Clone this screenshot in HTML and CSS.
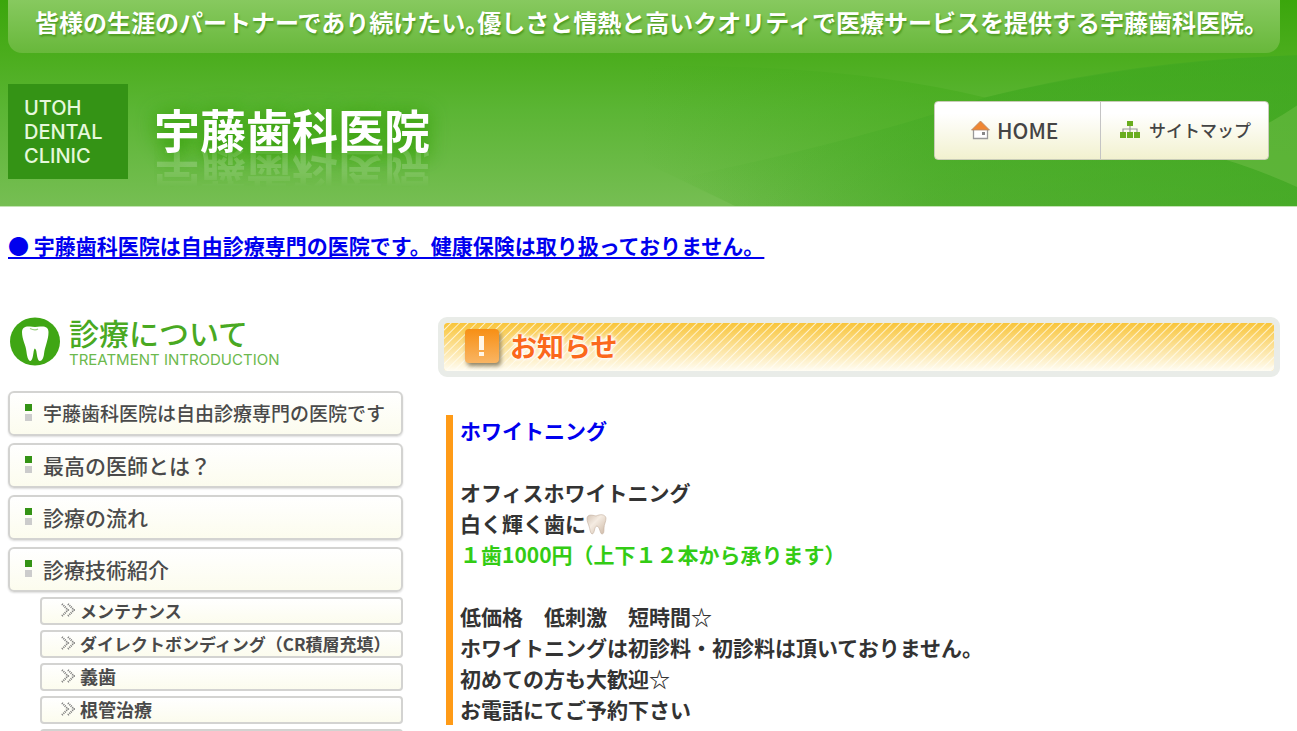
FILE: index.html
```html
<!DOCTYPE html>
<html lang="ja">
<head>
<meta charset="utf-8">
<meta name="viewport" content="width=device-width, initial-scale=1">
<title>宇藤歯科医院</title>
<link rel="stylesheet" href="styles.css">
</head>
<body>
<header class="header">
  <svg class="header-waves" viewBox="0 0 1297 205" preserveAspectRatio="none" aria-hidden="true">
    <defs>
      <linearGradient id="fadeA" x1="0" x2="1" y1="0" y2="0">
        <stop offset="0" stop-color="#43aa1b" stop-opacity="0"/>
        <stop offset=".45" stop-color="#43aa1b" stop-opacity=".5"/>
        <stop offset="1" stop-color="#43aa1b" stop-opacity=".6"/>
      </linearGradient>
      <linearGradient id="fadeB" x1="0" x2="1" y1="0" y2="0">
        <stop offset="0" stop-color="#3ea622" stop-opacity="0"/>
        <stop offset=".5" stop-color="#3ea622" stop-opacity=".4"/>
        <stop offset="1" stop-color="#3ea622" stop-opacity=".6"/>
      </linearGradient>
    </defs>
    <path fill="url(#fadeA)" d="M640 66 Q840 62 985 97 Q1130 62 1297 55 V205 H735 Q705 190 640 160Z"/>
    <path fill="url(#fadeB)" d="M676 178 Q860 140 985 97 Q1130 60 1297 55 V205 H735Z"/>
    <path fill="#7cc452" fill-opacity=".4" d="M1205 153 Q1250 165 1297 186 V105 Q1260 130 1205 153Z"/>
  </svg>
  <div class="header-inner">
    <p class="tagline">皆様の生涯のパートナーであり続けたい。優しさと情熱と高いクオリティで医療サービスを提供する宇藤歯科医院。</p>
    <div class="brand-row">
      <div class="brand">
        <p class="brand-en">UTOH<br>DENTAL<br>CLINIC</p>
        <h1 class="brand-name">宇藤歯科医院</h1>
      </div>
      <nav class="top-nav">
        <a class="top-link" href="#home">
          <svg class="top-icon" viewBox="0 0 20 20" aria-hidden="true">
            <path d="M3.500 9.500V18.500H17.500V9.500" fill="#fff" stroke="#999" stroke-width="1.300"/>
            <path d="M10.500 1 19.500 10H1.500Z" fill="#ef8632" stroke="#b08a70" stroke-width=".8"/>
            <rect x="12" y="12" width="3" height="3" fill="#888"/>
          </svg>
          HOME</a>
        <a class="top-link" href="#sitemap">
          <svg class="top-icon" viewBox="0 0 20 20" aria-hidden="true">
            <path d="M10 6V13M3 13V9H17V13" fill="none" stroke="#999" stroke-width="1.200"/>
            <path d="M7 1h6v5H7zM0 12h6v6H0zM7 12h6v6H7zM14 12h6v6h-6z" fill="#6aad1f"/>
          </svg>
          サイトマップ</a>
      </nav>
    </div>
  </div>
</header>

<main class="page">
  <p class="lead"><a href="#about">● 宇藤歯科医院は自由診療専門の医院です。健康保険は取り扱っておりません。</a></p>
  <div class="columns">
    <aside class="side">
      <div class="side-head">
        <svg class="side-icon" viewBox="0 0 50 50" aria-hidden="true">
          <ellipse cx="25" cy="24.500" rx="25" ry="24" fill="#3fa614"/>
          <path d="M12 15C12 10 16 9 20 9.500C23 10 27 10 30 9.500C35 9 38.500 10 38.500 15C38.500 23 35 29 34 37C33.500 41 32 44 30 44C27 44 27 36 26 33C25 31 24.500 31 24 33C23 37 23 44 20 44C18 43 17 39 16.500 35C16 28 12 23 12 15Z" fill="#fff"/>
          <path d="M20 11.500Q25 14 28 12" fill="none" stroke="#9ccf82" stroke-width="1.300"/>
        </svg>
        <div>
          <h2 class="side-title">診療について</h2>
          <p class="side-sub">TREATMENT INTRODUCTION</p>
        </div>
      </div>
      <ul class="menu">
        <li><a class="menu-link menu-link-long" href="#m1">宇藤歯科医院は自由診療専門の医院です</a></li>
        <li><a class="menu-link" href="#m2">最高の医師とは？</a></li>
        <li><a class="menu-link" href="#m3">診療の流れ</a></li>
        <li><a class="menu-link" href="#m4">診療技術紹介</a>
          <ul class="submenu">
            <li><a class="sub-link" href="#s1"><svg class="chev" viewBox="0 0 14 14" aria-hidden="true"><path d="M1 1 7 7 1 13M7 1 13 7 7 13"/></svg>メンテナンス</a></li>
            <li><a class="sub-link" href="#s2"><svg class="chev" viewBox="0 0 14 14" aria-hidden="true"><path d="M1 1 7 7 1 13M7 1 13 7 7 13"/></svg>ダイレクトボンディング（CR積層充填）</a></li>
            <li><a class="sub-link sub-link-wide" href="#s3"><svg class="chev" viewBox="0 0 14 14" aria-hidden="true"><path d="M1 1 7 7 1 13M7 1 13 7 7 13"/></svg>義歯</a></li>
            <li><a class="sub-link sub-link-wide" href="#s4"><svg class="chev" viewBox="0 0 14 14" aria-hidden="true"><path d="M1 1 7 7 1 13M7 1 13 7 7 13"/></svg>根管治療</a></li>
            <li class="sub-link"></li>
          </ul>
        </li>
      </ul>
    </aside>

    <section class="news">
      <div class="news-head">
        <svg class="news-icon" viewBox="0 0 36 36" aria-hidden="true">
          <defs><linearGradient id="badge" x1="0" x2="0" y1="0" y2="1"><stop offset="0" stop-color="#f78f14"/><stop offset="1" stop-color="#f9b563"/></linearGradient></defs>
          <rect x="1" y="1" width="34" height="34" rx="4" fill="url(#badge)"/>
          <path d="M15 8H20V22H15ZM15 24H20V28H15Z" fill="#fff6e6"/>
        </svg>
        <h2 class="news-title">お知らせ</h2>
      </div>
      <div class="news-body">
        <p><a class="news-link" href="#whitening">ホワイトニング</a></p>
        <p class="para">オフィスホワイトニング<br>白く輝く歯に<svg class="tooth" viewBox="0 0 21 21" role="img" aria-label="歯"><defs><linearGradient id="enamel" x1="0" x2="1" y1="0" y2="1"><stop offset="0" stop-color="#d3c2b3"/><stop offset=".4" stop-color="#f5ece2"/><stop offset="1" stop-color="#cdb8a5"/></linearGradient></defs><path d="M1 4C2 0 6 1 10 2C14 0 19 0 20 4C20 8 18 10 18 14C18 17 18 20 16 20C14 20 14 13 11 12C8 12 9 20 6 20C4 19 4 15 3 12C2 9 1 8 1 4Z" fill="url(#enamel)" stroke="#c2ae9d" stroke-width=".6"/></svg><br><span class="price">１歯1000円（上下１２本から承ります）</span></p>
        <p class="para">低価格　低刺激　短時間☆<br>ホワイトニングは初診料・初診料は頂いておりません。<br>初めての方も大歓迎☆<br>お電話にてご予約下さい</p>
      </div>
    </section>
  </div>
</main>
</body>
</html>
```
FILE: styles.css
```css
* { box-sizing: border-box; }

body {
  margin: 0;
  background: #fff;
  color: #333;
  font-family: "Noto Sans CJK JP", sans-serif;
}

h1, h2, p, ul { margin: 0; padding: 0; }
ul { list-style: none; }
svg { display: block; flex: none; }

.header {
  position: relative;
  background: linear-gradient(#3ba60c 0, #4bad1d 55px, #5bb534 110px, #76be53 100%);
  border-bottom: 1px solid #c3e3b3;
}

.header-waves {
  position: absolute;
  inset: 0;
  width: 100%;
  height: 100%;
}

.header-inner {
  position: relative;
  padding: 0 17px 27px 8px;
}

.tagline {
  height: 53px;
  padding: 0 0 0 27px;
  border-radius: 0 0 14px 14px;
  background: linear-gradient(#87c95f, #68b83b);
  color: #fff;
  font-size: 24px;
  font-weight: 700;
  line-height: 44px;
  white-space: nowrap;
  font-feature-settings: "halt";
  text-shadow: 1px 2px 2px #4c9a1f;
}

.brand-row {
  display: flex;
  justify-content: space-between;
  align-items: flex-start;
  padding: 31px 11px 0 0;
}

.brand { display: flex; gap: 26px; }

.brand-en {
  width: 120px;
  height: 95px;
  padding: 12px 16px;
  background: #349315;
  color: #e6f8dc;
  font: 500 20px/24px Inter, sans-serif;
}

.brand-name {
  height: 60px;
  margin-top: 14px;
  color: #fff;
  font-size: 46px;
  font-weight: 700;
  line-height: 60px;
  text-shadow: 0 0 20px #3fa514, 0 4px 16px #3fa514;
  -webkit-box-reflect: below -16px linear-gradient(transparent 25%, rgba(255, 255, 255, .35));
}

.top-nav {
  display: grid;
  grid-template-columns: 165px 168px;
  height: 59px;
  margin-top: 17px;
  border: 1px solid #c9ccb8;
  border-radius: 4px;
  background: linear-gradient(#fff 20%, #f2f1cf);
  overflow: hidden;
}

.top-link {
  display: flex;
  align-items: center;
  gap: 7px;
  padding: 0 0 2px 35px;
  color: #444;
  font: 500 21px/30px "Noto Sans CJK JP", sans-serif;
  text-decoration: none;
  white-space: nowrap;
}

.top-link + .top-link {
  padding-left: 19px;
  border-left: 1px solid #c4c4c4;
  font-size: 17px;
  gap: 9px;
}

.top-icon { width: 20px; height: 20px; }

.page { padding: 23px 17px 0 8px; }

.lead {
  font-size: 21px;
  font-weight: 700;
  line-height: 31px;
}

.lead a { color: #00e; text-underline-offset: 3px; }

.columns {
  display: grid;
  grid-template-columns: 395fr 842fr;
  gap: 35px;
  margin-top: 56px;
}

.side-head {
  display: flex;
  gap: 9px;
  height: 50px;
  margin: 0 0 24px 2px;
}

.side-icon { width: 50px; height: 50px; }

.side-title {
  color: #49a922;
  font-size: 30px;
  font-weight: 500;
  line-height: 30px;
}

.side-sub {
  margin-top: 4px;
  color: #6cb94d;
  font: 15px/18px Inter, sans-serif;
  white-space: nowrap;
}

.menu { display: grid; gap: 7px; }

.menu-link {
  display: flex;
  align-items: center;
  height: 45px;
  padding: 0 0 2px 17px;
  border: 2px solid #d3d3d1;
  border-radius: 6px;
  background: linear-gradient(#fff, #fcfcee);
  box-shadow: 0 1px 2px #ddd;
  color: #4a4a4a;
  font-size: 21px;
  font-weight: 500;
  text-decoration: none;
  white-space: nowrap;
}

.menu-link::before {
  content: "";
  width: 7px;
  height: 17px;
  margin: 0 11px 0 -2px;
  background: linear-gradient(#349315 0 7px, transparent 7px 10px, #ccc 10px);
}

.menu-link-long { font-size: 19px; }

.submenu {
  display: grid;
  gap: 5px;
  padding: 5px 0 0 32px;
}

.sub-link {
  display: flex;
  align-items: center;
  gap: 5px;
  height: 28px;
  padding: 0 0 2px 19px;
  border: 2px solid #d3d3d1;
  border-radius: 4px;
  background: linear-gradient(#fff, #fcfcee);
  color: #4a4a4a;
  font-size: 17px;
  font-weight: 700;
  text-decoration: none;
  white-space: nowrap;
}

.sub-link-wide { font-size: 18px; }

.chev {
  width: 14px;
  height: 14px;
  fill: none;
  stroke: #777;
  stroke-width: 2;
  stroke-dasharray: 1 1;
}

.news-head {
  display: flex;
  align-items: center;
  gap: 10px;
  height: 60px;
  padding: 0 0 3px 20px;
  border: 6px solid #e9ece8;
  border-radius: 9px;
  background:
    linear-gradient(rgba(255, 255, 255, 0), #fffdf4),
    repeating-linear-gradient(135deg, #f9c53a 0 4px, #fff0c4 5px, #f9c53a 6px);
  background-clip: padding-box;
  background-color: #fff;
}

.news-icon {
  width: 36px;
  height: 36px;
  filter: drop-shadow(2px 3px 2px #8f8467);
}

.news-title {
  color: #fb681c;
  font-size: 27px;
  font-weight: 700;
  line-height: 36px;
  text-shadow: 0 0 3px #fff, 0 0 3px #fff, 0 0 5px #fff, 0 0 5px #fff;
}

.news-body {
  margin: 38px 0 0 8px;
  padding-left: 7px;
  border-left: 7px solid #ff9b17;
  font-size: 21px;
  font-weight: 700;
  line-height: 31px;
}

.para { padding-top: 31px; }
.news-link { color: #00e; text-decoration: none; }
.price { color: #33cc14; }

.tooth {
  display: inline-block;
  width: 21px;
  height: 21px;
  vertical-align: -3px;
}
```
